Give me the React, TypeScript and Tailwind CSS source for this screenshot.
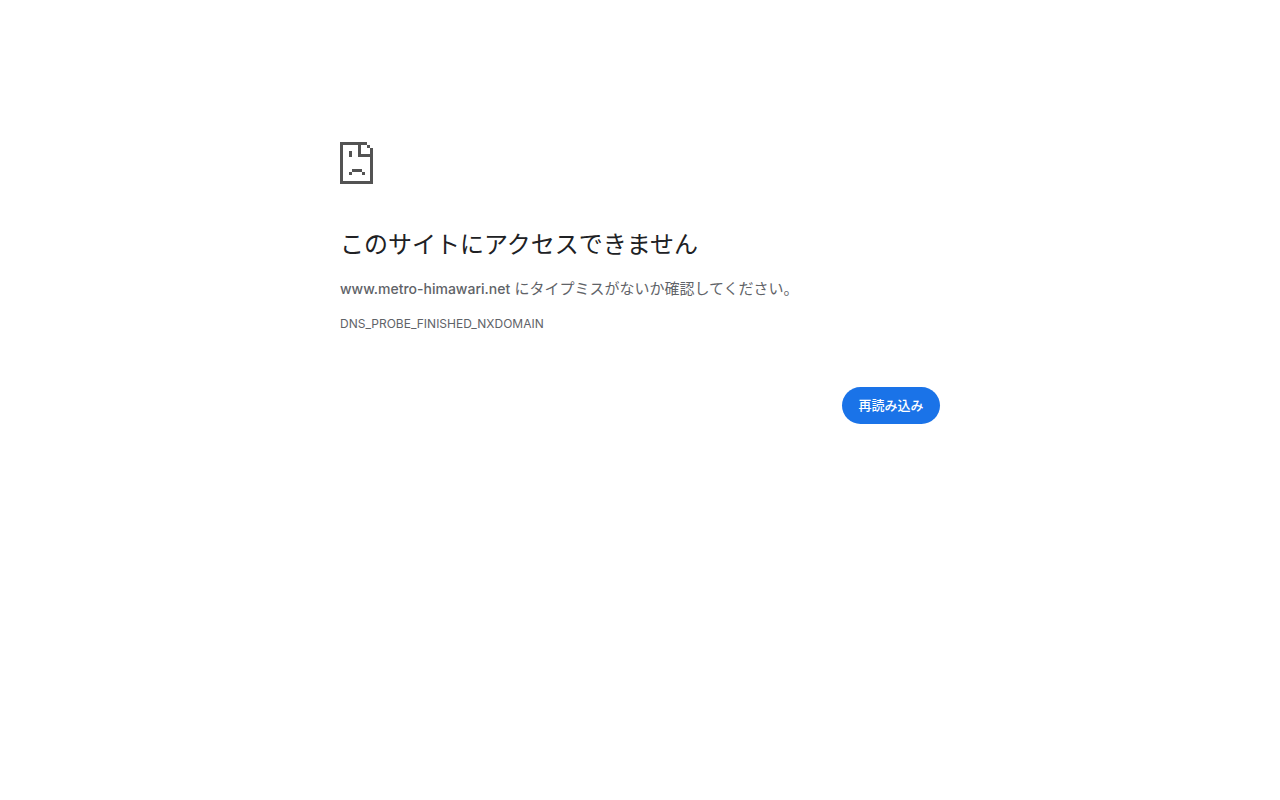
export default function App() {
  return (
    <main
      lang="ja"
      className="mx-auto max-w-[600px] pt-[142px] text-[15px] leading-6 text-[#5f6368] font-['Inter','Noto_Sans_CJK_JP',sans-serif]"
    >
      <svg
        width="33"
        height="42"
        viewBox="0 0 33 42"
        shapeRendering="crispEdges"
        fill="#535353"
        aria-hidden="true"
        className="block"
      >
        <path d="M0 0h27v3H21v9h12v3H18V3H3v36h27V6h3v36H0zM27 3h3v3h-3zM9 9h3v6H9zM12 27h10v3H12zM9 30h3v3H9zM22 30h3v3h-3z" />
      </svg>
      <h1 className="mt-[45px] text-2xl leading-8 font-normal text-[#202124]">
        このサイトにアクセスできません
      </h1>
      <p className="mt-4">
        <span className="text-sm leading-6 font-medium">www.metro-himawari.net</span> にタイプミスがないか確認してください。
      </p>
      <p className="mt-[11px] text-xs leading-6">DNS_PROBE_FINISHED_NXDOMAIN</p>
      <div className="mt-[51px] flex justify-end">
        <button
          type="button"
          className="min-w-[98px] cursor-pointer rounded-full bg-[#1a73e8] px-4 py-2 text-[13px] leading-[21px] font-medium text-white"
        >
          再読み込み
        </button>
      </div>
    </main>
  );
}
